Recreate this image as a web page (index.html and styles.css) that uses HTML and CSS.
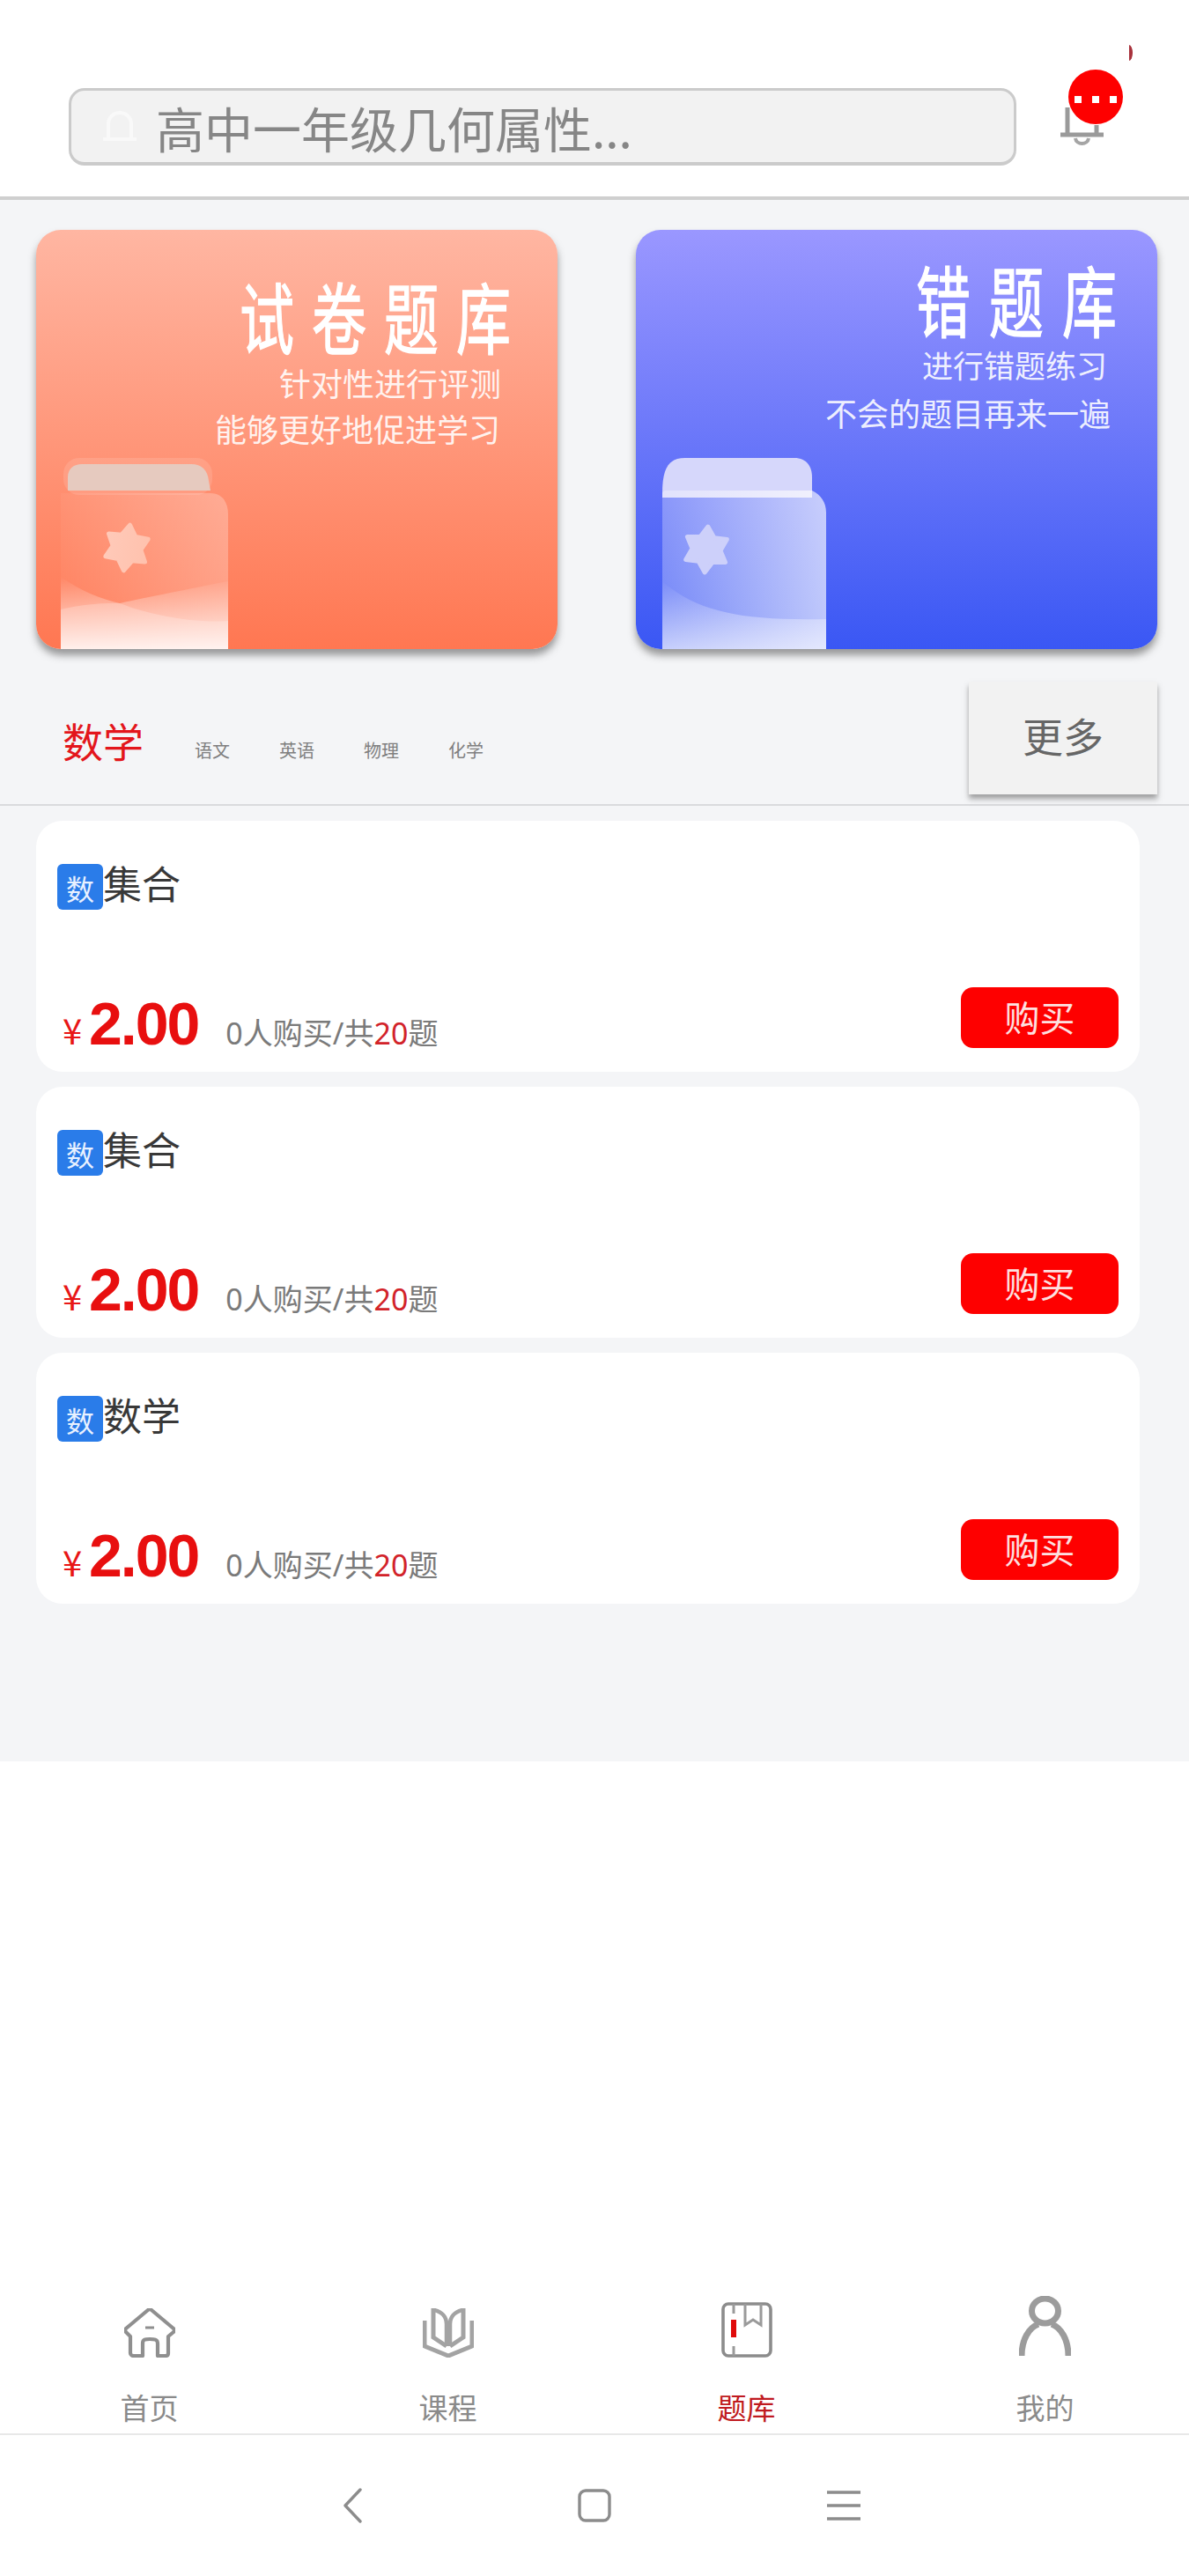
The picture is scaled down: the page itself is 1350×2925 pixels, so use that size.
FILE: index.html
```html
<!DOCTYPE html>
<html lang="zh-CN">
<head>
<meta charset="utf-8">
<title>题库</title>
<link rel="stylesheet" href="styles.css">
</head>
<body>
<div class="page">
  <header class="header">
    <div class="search">
      <svg class="search-icon" viewBox="0 0 47 38"><path d="M10 32V16C10 8 16 3 23 3S36 8 36 16V32M4 33H42" fill="none" stroke="#f9f9f9" stroke-width="4"/></svg>
      <span class="search-text">高中一年级几何属性...</span>
    </div>
    <div class="bell">
      <svg class="bell-icon" viewBox="0 0 49 45"><path d="M8 0V31M41 20V31" fill="none" stroke="#9a9a9a" stroke-width="5"/><path d="M0 31H49" stroke="#9a9a9a" stroke-width="5"/><path d="M17 35C18 43 31 43 32 35" fill="none" stroke="#a5a5a5" stroke-width="4"/></svg>
      <span class="badge"><i></i><i></i><i></i></span>
    </div>
    <span class="sliver"></span>
  </header>

  <main class="main">
    <section class="banners">
      <article class="banner banner-red">
        <h2 class="banner-title title-red"><span>试卷题库</span></h2>
        <p class="banner-sub sub-red">针对性进行评测</p>
        <p class="banner-sub sub-red2">能够更好地促进学习</p>
        <svg class="book book-red" viewBox="0 0 195 217">
          <defs>
            <linearGradient id="rb" x1="0" x2="1" y1="0" y2="0"><stop offset="0" stop-color="#fff" stop-opacity=".04"/><stop offset="1" stop-color="#fff" stop-opacity=".26"/></linearGradient>
            <linearGradient id="rw" x1="0" x2="0" y1="0" y2="1"><stop offset="0" stop-color="#fff" stop-opacity="0"/><stop offset="1" stop-color="#fff" stop-opacity=".85"/></linearGradient>
            <linearGradient id="rs" x1="0" x2="1" y1="0" y2="0"><stop offset="0" stop-color="#ffc9b8"/><stop offset="1" stop-color="#ffc2ae"/></linearGradient>
          </defs>
          <rect x="3" y="0" width="169" height="42" rx="18" fill="#fff" fill-opacity=".12"/>
          <path d="M8 37V22C8 12 15 7 24 7H148C160 7 167 14 168 26L170 37Z" fill="#e6cabf"/>
          <path d="M0 40H170C183 40 190 50 190 64V217H0Z" fill="url(#rb)"/>
          <path d="M0 135C25 152 45 160 67 165C100 158 150 148 190 140V217H0Z" fill="url(#rw)"/>
          <path d="M0 172C30 165 50 165 67 165C100 178 150 188 190 185V217H0Z" fill="#fff" fill-opacity=".22"/>
          <polygon transform="translate(75 102) rotate(8)" points="0,-26 8,-13.9 22.5,-13 16,0 22.5,13 8,13.9 0,26 -8,13.9 -22.5,13 -16,0 -22.5,-13 -8,-13.9" fill="url(#rs)" stroke="url(#rs)" stroke-width="5" stroke-linejoin="round"/>
        </svg>
      </article>
      <article class="banner banner-blue">
        <h2 class="banner-title title-blue"><span>错题库</span></h2>
        <p class="banner-sub sub-blue">进行错题练习</p>
        <p class="banner-sub sub-blue2">不会的题目再来一遍</p>
        <svg class="book book-blue" viewBox="0 0 187 217">
          <defs>
            <linearGradient id="bb" x1="0" x2="1" y1="0" y2="0"><stop offset="0" stop-color="#fff" stop-opacity=".28"/><stop offset="1" stop-color="#fff" stop-opacity=".66"/></linearGradient>
            <linearGradient id="bw" x1="0" x2="0" y1="0" y2="1"><stop offset="0" stop-color="#fff" stop-opacity="0"/><stop offset="1" stop-color="#fff" stop-opacity=".6"/></linearGradient>
          </defs>
          <path d="M0 40C0 10 8 0 26 0H150C164 0 170 10 170 22V45H0Z" fill="#d6d7fb"/>
          <path d="M0 40C2 36 4 37 8 37H170C180 42 186 50 186 62V217H0Z" fill="url(#bb)"/>
          <path d="M0 140C40 175 90 185 186 183V217H0Z" fill="url(#bw)"/>
          <polygon transform="translate(50 104) rotate(4)" points="0,-26 8,-13.9 22.5,-13 16,0 22.5,13 8,13.9 0,26 -8,13.9 -22.5,13 -16,0 -22.5,-13 -8,-13.9" fill="#cdd0fa" stroke="#cdd0fa" stroke-width="5" stroke-linejoin="round"/>
        </svg>
      </article>
    </section>

    <nav class="subjects">
      <div class="subject-list">
        <span class="subject-active">数学</span>
        <span class="subject">语文</span>
        <span class="subject">英语</span>
        <span class="subject">物理</span>
        <span class="subject">化学</span>
      </div>
      <button class="more">更多</button>
    </nav>

    <section class="items">
      <article class="item">
        <div class="item-title"><span class="tag">数</span>集合</div>
        <div class="item-foot">
          <div class="price-row">
            <span class="yen">¥</span><span class="price">2.00</span>
            <span class="info">0人购买/共<em>20</em>题</span>
          </div>
          <button class="buy">购买</button>
        </div>
      </article>
      <article class="item">
        <div class="item-title"><span class="tag">数</span>集合</div>
        <div class="item-foot">
          <div class="price-row">
            <span class="yen">¥</span><span class="price">2.00</span>
            <span class="info">0人购买/共<em>20</em>题</span>
          </div>
          <button class="buy">购买</button>
        </div>
      </article>
      <article class="item">
        <div class="item-title"><span class="tag">数</span>数学</div>
        <div class="item-foot">
          <div class="price-row">
            <span class="yen">¥</span><span class="price">2.00</span>
            <span class="info">0人购买/共<em>20</em>题</span>
          </div>
          <button class="buy">购买</button>
        </div>
      </article>
    </section>
  </main>

  <div class="spacer"></div>

  <nav class="tabbar">
    <a class="tab">
      <span class="tab-icon"><svg class="ic-home" viewBox="0 0 58 56"><path d="M7 32L2 27C1 26 1 24 2 23L27 2C28 1 30 1 31 2L56 23C57 24 57 26 56 27L50 32V51C50 53 49 54 47 54H38V40C38 35 34 35 29 35S21 35 21 40V54H11C9 54 7 53 7 51Z" fill="none" stroke="#8f8f8f" stroke-width="4.2" stroke-linejoin="round"/><path d="M24 22H34" stroke="#8f8f8f" stroke-width="3"/></svg></span>
      <span class="tab-label">首页</span>
    </a>
    <a class="tab">
      <span class="tab-icon"><svg class="ic-book" viewBox="0 0 58 56"><path d="M2 14V43L29 54L56 43V14" fill="none" stroke="#a3a3a3" stroke-width="5" stroke-linejoin="round"/><path d="M12 0V33L27 43M46 0V33L31 43" fill="none" stroke="#a3a3a3" stroke-width="5"/><path d="M13 2C22 4 27 10 27 18V43M45 2C36 4 31 10 31 18V43" fill="none" stroke="#a3a3a3" stroke-width="4.5"/></svg></span>
      <span class="tab-label">课程</span>
    </a>
    <a class="tab tab-active">
      <span class="tab-icon"><svg class="ic-bank" viewBox="0 0 58 63"><rect x="2" y="2" width="54" height="59" rx="6" fill="none" stroke="#8c8c8c" stroke-width="3.6"/><path d="M14 2V13M14 50V61" stroke="#9a9a9a" stroke-width="3"/><path d="M14 20V40" stroke="#e00b0b" stroke-width="6"/><path d="M27 2V26L36 20L45 26V2" fill="none" stroke="#9a9a9a" stroke-width="3"/></svg></span>
      <span class="tab-label">题库</span>
    </a>
    <a class="tab">
      <span class="tab-icon"><svg class="ic-user" viewBox="0 0 59 70"><ellipse cx="29.5" cy="17" rx="15" ry="14" fill="none" stroke="#9c9c9c" stroke-width="7"/><path d="M3 68C3 50 11 36 22 32M56 68C56 50 48 36 37 32" fill="none" stroke="#9c9c9c" stroke-width="7"/></svg></span>
      <span class="tab-label">我的</span>
    </a>
  </nav>

  <div class="sysnav">
    <svg class="sys-back" viewBox="0 0 22 40"><path d="M20 2L3 20L20 38" fill="none" stroke="#8c8c8c" stroke-width="3.4" stroke-linecap="round" stroke-linejoin="round"/></svg>
    <svg class="sys-home" viewBox="0 0 38 38"><rect x="2" y="2" width="34" height="34" rx="7" fill="none" stroke="#8c8c8c" stroke-width="3.4"/></svg>
    <svg class="sys-menu" viewBox="0 0 38 34"><path d="M0 2H38M0 17H38M0 32H38" stroke="#8c8c8c" stroke-width="3.4"/></svg>
  </div>
</div>
</body>
</html>
```
FILE: styles.css
```css
* { box-sizing: border-box; }
html, body { margin: 0; padding: 0; background: #fff; }
body { font-family: "Noto Sans CJK SC", "Noto Sans", sans-serif; }
p, h2 { margin: 0; font-weight: 400; }
em { font-style: normal; }
svg { display: block; }

.page { width: 1350px; height: 2925px; display: flex; flex-direction: column; overflow: hidden; }

/* header */
.header { position: relative; display: flex; align-items: flex-start; padding: 100px 0 35px 78px; height: 227px; border-bottom: 4px solid #cfcfcf; background: #fff; }
.search { width: 1076px; height: 88px; display: flex; align-items: center; padding-left: 32px; background: #f2f2f2; border: 3px solid #cbcbcb; border-bottom-width: 4px; border-radius: 18px; }
.search-icon { width: 47px; height: 38px; flex: none; margin-right: 17px; }
.search-text { font-size: 55px; line-height: 60px; color: #868686; white-space: nowrap; }
.bell { position: relative; width: 49px; height: 45px; margin: 22px 0 0 50px; }
.bell-icon { width: 49px; height: 45px; }
.badge { position: absolute; left: 9px; top: -43px; width: 62px; height: 62px; border-radius: 50%; background: #fe0000; display: flex; justify-content: center; align-items: center; gap: 12px; padding-top: 6px; }
.badge i { width: 8px; height: 8px; background: #fff; display: block; }
.sliver { position: absolute; left: 1282px; top: 51px; width: 4px; height: 18px; border-radius: 0 4px 4px 0 / 0 9px 9px 0; background: #a8323c; }

/* main */
.main { background: #f4f5f7; padding-bottom: 179px; }
.banners { display: flex; justify-content: space-between; padding: 34px 36px 0 41px; }
.banner { position: relative; width: 592px; height: 476px; border-radius: 28px; overflow: hidden; box-shadow: 0 7px 9px rgba(60, 60, 60, .5); }
.banner-red { background: linear-gradient(180deg, #ffb6a2 0%, #ff7752 100%); }
.banner-blue { background: linear-gradient(180deg, #9a97ff 0%, #3a57f4 100%); }
.banner-title { color: #fff; font-size: 62px; line-height: 62px; text-align: right; white-space: nowrap; -webkit-text-stroke: 1px #fff; }
.banner-title span { display: inline-block; transform: scaleY(1.42); }
.title-red { padding: 65px 33px 0 0; }
.title-red span { letter-spacing: 20px; }
.title-blue { padding: 46px 25px 0 0; }
.title-blue span { letter-spacing: 21px; }
.banner-sub { color: rgba(255, 255, 255, .9); font-size: 36px; line-height: 46px; text-align: right; white-space: nowrap; }
.sub-red { padding: 23px 64px 0 0; }
.sub-red2 { padding: 6px 65px 0 0; }
.sub-blue { padding: 22px 57px 0 0; font-size: 35px; }
.sub-blue2 { padding: 8px 53px 0 0; }
.book { position: absolute; bottom: 0; height: 217px; }
.book-red { left: 28px; width: 195px; }
.book-blue { left: 30px; width: 187px; }

/* subjects */
.subjects { display: flex; justify-content: space-between; align-items: flex-start; padding: 37px 36px 11px 71px; border-bottom: 2px solid #d9dadd; }
.subject-list { display: flex; align-items: baseline; padding-top: 33px; }
.subject-active { font-size: 46px; line-height: 66px; color: #e3161c; margin-right: 58px; }
.subject { font-size: 20px; line-height: 30px; color: #7f7f7f; width: 96px; flex: none; }
.more { width: 214px; height: 128px; border: 0; border-radius: 0; background: #f2f2f2; color: #666; font: inherit; font-size: 46px; box-shadow: 0 5px 6px rgba(90, 90, 90, .55); padding: 0 0 8px; }

/* items */
.items { display: flex; flex-direction: column; gap: 17px; padding: 17px 56px 0 41px; }
.item { height: 285px; background: #fff; border-radius: 30px; padding: 49px 24px 27px; display: flex; flex-direction: column; justify-content: space-between; }
.item-title { display: flex; align-items: flex-start; font-size: 44px; line-height: 42px; color: #383838; }
.tag { width: 52px; height: 52px; flex: none; border-radius: 6px; background: #2a7ce9; color: #e8f1ff; font-size: 32px; line-height: 54px; text-align: center; }
.item-foot { display: flex; justify-content: space-between; align-items: flex-end; }
.price-row { display: flex; align-items: baseline; font-family: "Liberation Sans", "Noto Sans CJK SC", sans-serif; line-height: 76px; height: 66px; }
.yen { font-size: 40px; color: #e81616; margin: 0 6px 0 6px; width: 24px; font-family: "Noto Sans CJK SC", sans-serif; }
.price { font-size: 68px; font-weight: 700; color: #e80f0f; letter-spacing: -2px; margin-right: 31px; }
.info { font-size: 34px; color: #7a7a7a; font-family: "Noto Sans", "Noto Sans CJK SC", sans-serif; }
.info em { color: #d2232a; }
.buy { width: 179px; height: 69px; border: 0; border-radius: 14px; background: #fe0000; color: #fde0e0; font: inherit; font-size: 40px; line-height: 66px; padding: 0 0 4px; }

/* tab bar */
.spacer { flex: 1; background: #fff; }
.tabbar { display: grid; grid-template-columns: repeat(4, 339px); border-bottom: 2px solid #e8e8e8; padding-bottom: 10px; }
.tab { display: flex; flex-direction: column; align-items: center; }
.tab-icon { height: 70px; display: flex; align-items: flex-end; margin-bottom: 36px; }
.tab-label { font-size: 33px; line-height: 40px; color: #8a8a8a; }
.tab-active .tab-label { color: #c01a20; }
.ic-home, .ic-book { width: 58px; height: 56px; }
.ic-bank { width: 58px; height: 63px; }
.ic-user { width: 59px; height: 70px; }

/* system nav */
.sysnav { height: 160px; display: flex; align-items: center; justify-content: center; gap: 245px; padding-left: 16px; }
.sys-back { width: 22px; height: 40px; }
.sys-home { width: 38px; height: 38px; }
.sys-menu { width: 38px; height: 34px; }
```
